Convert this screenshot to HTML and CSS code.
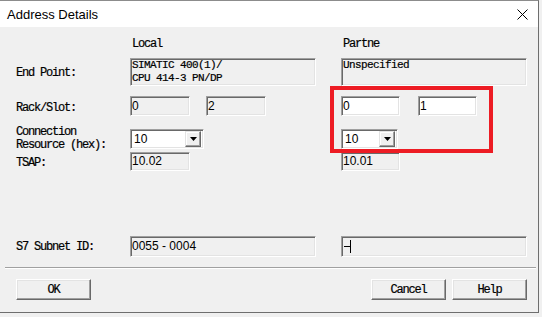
FILE: index.html
```html
<!DOCTYPE html>
<html lang="en">
<head>
    <meta charset="UTF-8">
    <title>Address Details</title>
    <link rel="stylesheet" href="styles.css">
</head>
<body>

<div class="dialog">
    <div class="titlebar">
        <span class="title">Address Details</span>
        <svg class="close" width="11" height="11" viewBox="0 0 11 11">
            <path d="M0.5 0.5 L10.5 10.5 M10.5 0.5 L0.5 10.5" stroke="#000" stroke-width="1" fill="none"/>
        </svg>
    </div>

    <div class="content">
        <!-- column headers -->
        <div class="row head">
            <span></span>
            <span class="colhead">Local</span>
            <span class="colhead">Partne</span>
        </div>

        <div class="row endpoint">
            <span class="label">End Point:</span>
            <div class="field ro wide tall mono">SIMATIC 400(1)/<br>CPU 414-3 PN/DP</div>
            <div class="field ro wide tall mono">Unspecified</div>
        </div>

        <div class="row rack">
            <span class="label">Rack/Slot:</span>
            <div class="pair local-pair">
                <div class="field ro w60">0</div>
                <div class="field ro w60">2</div>
            </div>
            <div class="pair partner-pair">
                <div class="field edit w59">0</div>
                <div class="field edit w59">1</div>
            </div>
        </div>

        <div class="row conn">
            <span class="label two-line">Connection<br>Resource (hex):</span>
            <div class="combo w74">
                <span class="val">10</span>
                <span class="drop"><svg width="7" height="4" viewBox="0 0 7 4"><path d="M0 0 H7 L3.5 4 Z" fill="#000"/></svg></span>
            </div>
            <div class="combo w57">
                <span class="val">10</span>
                <span class="drop"><svg width="7" height="4" viewBox="0 0 7 4"><path d="M0 0 H7 L3.5 4 Z" fill="#000"/></svg></span>
            </div>
        </div>

        <div class="row tsap">
            <span class="label">TSAP:</span>
            <div class="field ro w60">10.02</div>
            <div class="field ro w59">10.01</div>
        </div>

        <div class="row subnet">
            <span class="label">S7 Subnet ID:</span>
            <div class="field ro wide">0055 - 0004</div>
            <div class="field ro wide"><span class="dash"></span><span class="caret"></span></div>
        </div>
    </div>

    <div class="separator"></div>

    <div class="buttons">
        <button class="btn">OK</button>
        <span class="spacer"></span>
        <button class="btn">Cancel</button>
        <button class="btn">Help</button>
    </div>

    <!-- red highlight drawn over the partner fields -->
    <div class="mark"></div>
</div>

</body>
</html>
```

FILE: styles.css
```css
body {
    margin: 0;
    padding: 0;
    background: #f0f0f0;
    font-family: "Liberation Sans", Arial, sans-serif;
    font-size: 12px;
    color: #000;
}
.dialog {
    position: relative;
    width: 538px;
    height: 311px;
    background: #f0f0f0;
    border-top: 1px solid #8c8c8c;
    border-right: 1px solid #6e6e6e;
    border-bottom: 1px solid #6e6e6e;
}
.titlebar {
    height: 26px;
    background: #fff;
    display: flex;
    align-items: center;
    padding-left: 7px;
}
.title {
    font-size: 13px;
    color: #000;
}
.close {
    margin-left: auto;
    margin-right: 10px;
}
.content {
    padding: 9px 0 0 16px;
}
.row {
    display: grid;
    grid-template-columns: 114px 211px 1fr;
    align-items: center;
}
.label, .colhead, .mono {
    font-family: "Liberation Mono", "Courier New", monospace;
    font-size: 12px;
    letter-spacing: -1.2px;
    -webkit-text-stroke: 0.2px #000;
}
.colhead {
    padding-left: 2px;
}
.two-line {
    line-height: 13px;
}
.head {
    height: 16px;
}
.endpoint {
    margin-top: 6px;
    height: 28px;
}
.endpoint .label {
    padding-top: 2px;
}
.rack {
    margin-top: 10px;
    height: 20px;
}
.rack .label {
    padding-top: 3px;
}
.conn {
    margin-top: 10px;
    height: 20px;
}
.tsap {
    margin-top: 6px;
    height: 19px;
}
.tsap .label {
    padding-top: 3px;
}
.subnet {
    margin-top: 65px;
    height: 21px;
}

/* sunken text boxes */
.field {
    box-sizing: border-box;
    height: 20px;
    line-height: 16px;
    padding-left: 1px;
    border: 1px solid;
    border-color: #a0a0a0 #fff #fff #a0a0a0;
    box-shadow: inset 1px 1px 0 #696969, inset -1px -1px 0 #e3e3e3;
    padding-top: 1px;
    white-space: nowrap;
    overflow: hidden;
}
.field.ro {
    background: #f0f0f0;
}
.field.edit {
    background: #fff;
}
.tsap .field {
    height: 19px;
    line-height: 15px;
}
.subnet .field {
    height: 21px;
    line-height: 17px;
}
.field.wide {
    width: 186px;
}
.field.tall {
    height: 28px;
    font-size: 11px;
    letter-spacing: -0.6px;
    line-height: 12.5px;
    padding-top: 0;
}
.w60 { width: 60px; }
.w59 { width: 59px; }
.pair {
    display: flex;
}
.local-pair { gap: 16px; }
.partner-pair { gap: 18px; }
.dash {
    display: inline-block;
    width: 6px;
    height: 1px;
    background: #000;
    vertical-align: middle;
    margin-left: 1px;
}
.caret {
    display: inline-block;
    width: 1px;
    height: 13px;
    background: #000;
    vertical-align: middle;
}

/* drop down lists */
.combo {
    box-sizing: border-box;
    height: 20px;
    display: flex;
    align-items: center;
    background: #fff;
    border: 1px solid;
    border-color: #a0a0a0 #fff #fff #a0a0a0;
    box-shadow: inset 1px 1px 0 #696969, inset -1px -1px 0 #e3e3e3;
    padding: 2px;
}
.w74 { width: 74px; }
.w57 { width: 57px; }
.combo .val {
    flex: 1;
    padding-left: 1px;
}
.combo .drop {
    box-sizing: border-box;
    width: 16px;
    height: 16px;
    display: flex;
    align-items: center;
    justify-content: center;
    background: #f0f0f0;
    border: 1px solid;
    border-color: #e3e3e3 #696969 #696969 #e3e3e3;
    box-shadow: inset -1px -1px 0 #a0a0a0, inset 1px 1px 0 #fff;
}

.separator {
    margin: 10px 2px 0 5px;
    border-top: 1px solid #a0a0a0;
    border-bottom: 1px solid #fff;
}
.buttons {
    display: flex;
    gap: 6px;
    margin-top: 10px;
    padding: 0 11px 0 16px;
}
.spacer {
    flex: 1;
}
.btn {
    box-sizing: border-box;
    width: 75px;
    height: 21px;
    padding: 0;
    background: #f0f0f0;
    font-family: "Liberation Mono", "Courier New", monospace;
    font-size: 12px;
    letter-spacing: -1.2px;
    -webkit-text-stroke: 0.2px #000;
    color: #000;
    border: 1px solid;
    border-color: #fff #696969 #696969 #fff;
    box-shadow: inset -1px -1px 0 #a0a0a0, inset 1px 1px 0 #e3e3e3;
}
.mark {
    position: absolute;
    left: 330px;
    top: 85px;
    width: 163px;
    height: 67px;
    box-sizing: border-box;
    border: 4px solid #ed1c24;
}
```
